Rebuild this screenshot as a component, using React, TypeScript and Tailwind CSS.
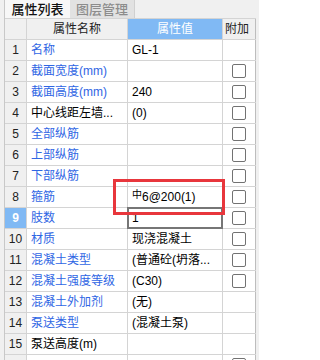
import React from "react";

type Row = {
  no: number;
  name: string;
  value?: React.ReactNode;
  blue: boolean;
  check: boolean;
};

const rows: Row[] = [
  { no: 1, name: "名称", value: "GL-1", blue: true, check: false },
  { no: 2, name: "截面宽度(mm)", blue: true, check: true },
  { no: 3, name: "截面高度(mm)", value: "240", blue: true, check: true },
  { no: 4, name: "中心线距左墙...", value: "(0)", blue: false, check: true },
  { no: 5, name: "全部纵筋", blue: true, check: true },
  { no: 6, name: "上部纵筋", blue: true, check: true },
  { no: 7, name: "下部纵筋", blue: true, check: true },
  {
    no: 8,
    name: "箍筋",
    value: (
      <>
        <span className="relative -top-[2px] text-[10px]">中</span>6@200(1)
      </>
    ),
    blue: true,
    check: true,
  },
  { no: 9, name: "肢数", value: "1", blue: true, check: true },
  { no: 10, name: "材质", value: "现浇混凝土", blue: true, check: true },
  { no: 11, name: "混凝土类型", value: "(普通砼(坍落...", blue: true, check: true },
  { no: 12, name: "混凝土强度等级", value: "(C30)", blue: true, check: true },
  { no: 13, name: "混凝土外加剂", value: "(无)", blue: true, check: false },
  { no: 14, name: "泵送类型", value: "(混凝土泵)", blue: true, check: false },
  { no: 15, name: "泵送高度(m)", blue: false, check: false },
  { no: 16, name: "", blue: false, check: true },
];

function Checkbox() {
  return <span className="block w-[14px] h-[14px] rounded-[2px] border border-[#727272] bg-white" />;
}

export default function App() {
  return (
    <div
      className="relative w-[259px] h-[360px] overflow-hidden bg-[#f0f0f0] flex text-[12px] leading-none text-black"
      style={{ fontFamily: '"Liberation Sans", "Noto Sans CJK SC", sans-serif' }}
    >
      {/* left strip */}
      <div className="w-[5px] shrink-0 border-r border-[#c8c8c8] bg-[#f0f0f0]" />

      <div className="flex flex-col w-[251px] shrink-0">
        {/* TABS */}
        <div className="h-[18px] shrink-0 flex items-stretch bg-[#f0f0f0]">
          <div className="w-[65px] flex items-center justify-center bg-[#f7f7f7] text-[13px] font-medium text-[#111]">
            属性列表
          </div>
          <div className="w-[65px] flex items-center justify-center bg-[#e2e2e2] text-[13px] font-medium text-[#8c8c8c] border-r border-[#d0d0d0]">
            图层管理
          </div>
        </div>

        {/* HEADER */}
        <div className="h-[22px] shrink-0 flex border-y border-[#d4d4d4] bg-[#f0f0f0]">
          <div className="w-[22px] border-r border-[#d4d4d4]" />
          <div className="w-[101px] border-r border-[#d4d4d4] flex items-center justify-center text-[#222]">
            属性名称
          </div>
          <div className="w-[95px] flex items-center justify-center bg-[#80b9f4] text-white border-r border-[#d4d4d4]">
            属性值
          </div>
          <div className="w-[33px] flex items-center pl-[2px] text-[#222] border-r border-[#bdbdbd]">附加</div>
        </div>

        {/* ROWS */}
        {rows.map((r) => (
          <div key={r.no} className="h-[21px] shrink-0 flex border-b border-[#d4d4d4]">
            <div
              className={
                r.no === 9
                  ? "w-[22px] border-r border-[#d4d4d4] flex items-center justify-center bg-[#80b9f4] text-white font-bold"
                  : "w-[22px] border-r border-[#d4d4d4] flex items-center justify-center bg-[#f0f0f0] text-[#222]"
              }
            >
              {r.no < 16 ? r.no : ""}
            </div>
            <div
              className={
                r.blue
                  ? "w-[101px] border-r border-[#d4d4d4] flex items-center pl-[4px] bg-white text-[#2f66e4] whitespace-nowrap overflow-hidden"
                  : "w-[101px] border-r border-[#d4d4d4] flex items-center pl-[4px] bg-white text-black whitespace-nowrap overflow-hidden"
              }
            >
              {r.name}
            </div>
            <div className="relative w-[95px] border-r border-[#d4d4d4] flex items-center pl-[4px] bg-white whitespace-nowrap overflow-visible">
              {r.value}
              {r.no === 9 && (
                <span className="absolute -top-px -left-px w-[96px] h-[22px] border-2 border-[#767676]" />
              )}
            </div>
            <div className="w-[33px] flex items-center justify-center bg-white border-r border-[#bdbdbd]">
              {r.check && <Checkbox />}
            </div>
          </div>
        ))}
      </div>

      {/* red highlight box */}
      <div className="absolute left-[113px] top-[179px] w-[112px] h-[36px] border-[3px] border-[#e8363c] pointer-events-none" />
    </div>
  );
}
